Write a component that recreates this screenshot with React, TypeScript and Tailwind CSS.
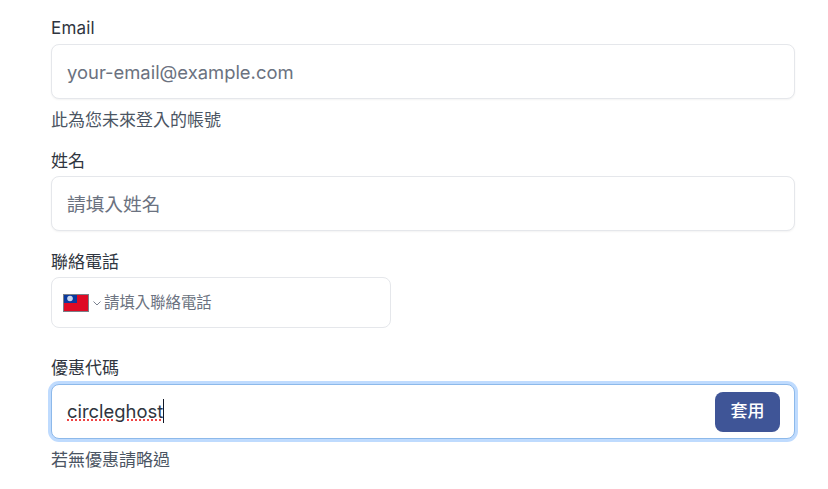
const font = "font-['Inter','Noto_Sans_CJK_TC',sans-serif]";

function Label({ children, className = "" }: { children: React.ReactNode; className?: string }) {
  return <div className={`h-6 text-[17px] leading-6 text-[#2f3540] ${className}`}>{children}</div>;
}

function Help({ children, className = "" }: { children: React.ReactNode; className?: string }) {
  return <div className={`h-5 text-[17px] leading-5 text-[#4b5563] ${className}`}>{children}</div>;
}

function Field({ placeholder, className = "" }: { placeholder: string; className?: string }) {
  return (
    <div className={`flex h-[55px] items-center rounded-lg border border-[#e5e7eb] bg-white pl-[15px] pr-4 text-[#6b7280] shadow-[0_1px_2px_rgba(0,0,0,0.05)] ${className}`}>
      {placeholder}
    </div>
  );
}

function Flag() {
  return (
    <svg width="26" height="18" viewBox="0 0 26 18" className="shrink-0">
      <rect width="26" height="18" fill="#de0a24" />
      <rect width="14" height="9" fill="#0a3a9e" />
      <circle cx="7" cy="4.5" r="2.8" fill="#c9d6ef" />
      <rect x="0.5" y="0.5" width="25" height="17" fill="none" stroke="#7a7f88" />
    </svg>
  );
}

export default function App() {
  return (
    <div className={`${font} h-[489px] w-[828px] overflow-hidden bg-white pl-[51px] pr-[33px] pt-4`}>
      <Label className="tracking-[0.2px]">Email</Label>
      <Field placeholder="your-email@example.com" className="mt-1 pt-[2px] text-[18.4px]" />
      <Help className="mt-[11px]">此為您未來登入的帳號</Help>
      <Label className="mt-[19px]">姓名</Label>
      <Field placeholder="請填入姓名" className="mt-[3px] pt-[3px] text-[18.7px]" />
      <Label className="mt-[18px] pt-[1px]">聯絡電話</Label>
      <div className="mt-1 flex h-[51px] w-[340px] items-center rounded-lg border border-[#e5e7eb] bg-white pl-[11px] text-[15.4px] text-[#6b7280]">
        <Flag />
        <svg width="10" height="10" viewBox="0 0 10 10" className="ml-[3px] mr-[2px] shrink-0" fill="none" stroke="#7b8290" strokeWidth="1">
          <path d="M1.5 3.5l3.5 3.5 3.5-3.5" />
        </svg>
        <span>請填入聯絡電話</span>
      </div>
      <Label className="mt-7">優惠代碼</Label>
      <div className="mt-1 flex h-[55px] items-center justify-between rounded-lg border border-[#8db9ea] bg-white pl-[15px] pr-[14px] shadow-[0_0_0_3px_#bfdbfe]">
        <div className="flex items-center text-[18.4px] text-[#2f3540]">
          <span className="underline decoration-[#ef4444] decoration-dotted decoration-2 underline-offset-2">circleghost</span>
          <span className="h-[24px] w-px bg-[#111827]" />
        </div>
        <div className="flex h-10 w-[65px] items-center justify-center rounded-lg bg-[#3f5597] text-[17px] font-medium text-white">套用</div>
      </div>
      <Help className="mt-[11px]">若無優惠請略過</Help>
    </div>
  );
}
